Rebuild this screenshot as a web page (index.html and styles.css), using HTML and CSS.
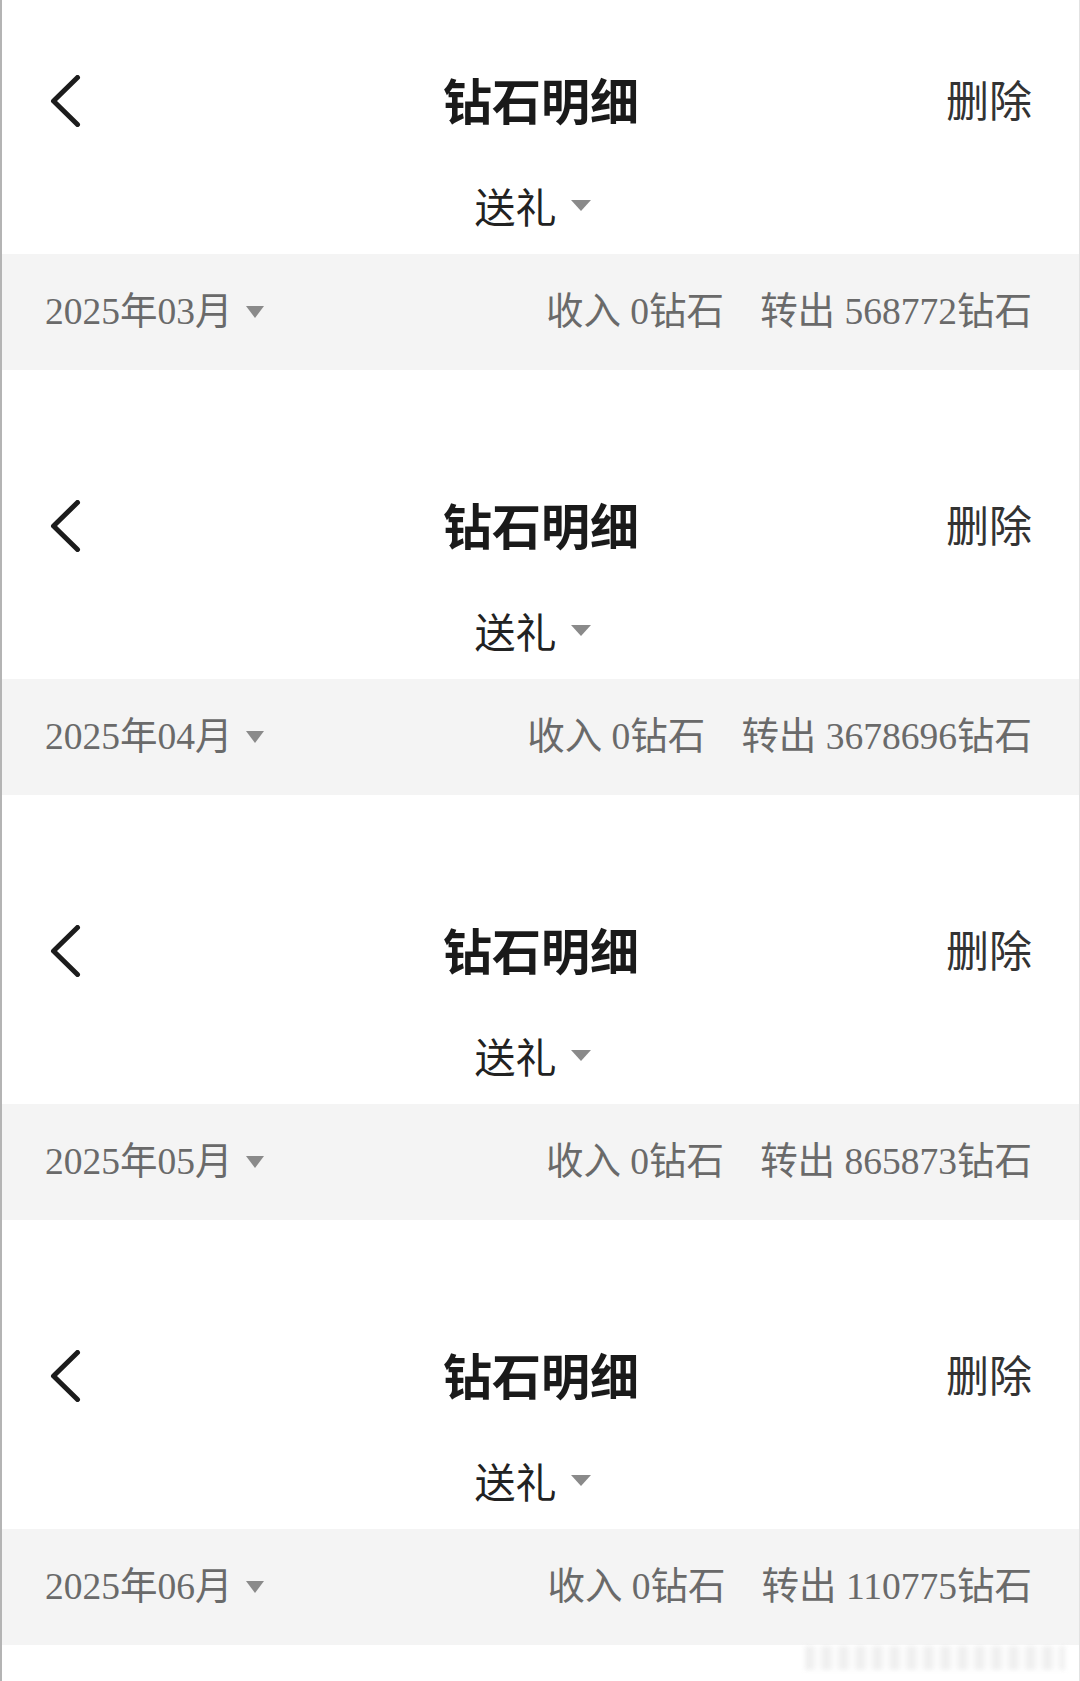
FILE: index.html
```html
<!DOCTYPE html>
<html lang="zh-CN">
<head>
    <meta charset="UTF-8">
    <meta name="viewport" content="width=device-width, initial-scale=1.0">
    <title>钻石明细</title>
    <link rel="stylesheet" href="styles.css">
</head>
<body>
    <div class="page">
        <section class="screen">
            <div class="nav">
                <span class="back"><svg width="32" height="52" viewBox="0 0 32 52"><polyline points="27.5,2.5 3.5,26 27.5,49.5" /></svg></span>
                <h1 class="title">钻石明细</h1>
                <span class="action">删除</span>
            </div>
            <div class="filter"><span>送礼</span><i class="caret"></i></div>
            <div class="summary">
                <div class="month">2025年03月<i class="caret small"></i></div>
                <div class="totals"><span>收入 0钻石</span><span>转出 568772钻石</span></div>
            </div>
        </section>
        <section class="screen">
            <div class="nav">
                <span class="back"><svg width="32" height="52" viewBox="0 0 32 52"><polyline points="27.5,2.5 3.5,26 27.5,49.5" /></svg></span>
                <h1 class="title">钻石明细</h1>
                <span class="action">删除</span>
            </div>
            <div class="filter"><span>送礼</span><i class="caret"></i></div>
            <div class="summary">
                <div class="month">2025年04月<i class="caret small"></i></div>
                <div class="totals"><span>收入 0钻石</span><span>转出 3678696钻石</span></div>
            </div>
        </section>
        <section class="screen">
            <div class="nav">
                <span class="back"><svg width="32" height="52" viewBox="0 0 32 52"><polyline points="27.5,2.5 3.5,26 27.5,49.5" /></svg></span>
                <h1 class="title">钻石明细</h1>
                <span class="action">删除</span>
            </div>
            <div class="filter"><span>送礼</span><i class="caret"></i></div>
            <div class="summary">
                <div class="month">2025年05月<i class="caret small"></i></div>
                <div class="totals"><span>收入 0钻石</span><span>转出 865873钻石</span></div>
            </div>
        </section>
        <section class="screen">
            <div class="nav">
                <span class="back"><svg width="32" height="52" viewBox="0 0 32 52"><polyline points="27.5,2.5 3.5,26 27.5,49.5" /></svg></span>
                <h1 class="title">钻石明细</h1>
                <span class="action">删除</span>
            </div>
            <div class="filter"><span>送礼</span><i class="caret"></i></div>
            <div class="summary">
                <div class="month">2025年06月<i class="caret small"></i></div>
                <div class="totals"><span>收入 0钻石</span><span>转出 110775钻石</span></div>
            </div>
        </section>
        <div class="footer"><div class="watermark"></div></div>
    </div>
</body>
</html>
```

FILE: styles.css
```css
body {
    margin: 0;
    padding: 0;
    background: #fff;
    font-family: "Noto Sans CJK SC", "Noto Sans", sans-serif;
}
.page {
    width: 1080px;
    min-height: 1681px;
    box-sizing: border-box;
    border-left: 2px solid #b4b4b4;
    border-right: 1px solid #e2e2e2;
    background: #fff;
}
.screen + .screen {
    margin-top: 55px;
}
.nav {
    display: grid;
    grid-template-columns: 1fr auto 1fr;
    align-items: center;
    height: 124px;
    padding: 36px 47px 0 48px;
}
.back {
    display: flex;
    align-items: center;
    margin-top: 6px;
}
.back svg polyline {
    fill: none;
    stroke: #1c1c1c;
    stroke-width: 5;
    stroke-linecap: round;
    stroke-linejoin: round;
}
.title {
    margin: 0;
    font-size: 49px;
    font-weight: 700;
    line-height: 1;
    color: #1a1a1a;
}
.action {
    justify-self: end;
    font-size: 43px;
    line-height: 1;
    color: #333;
}
.filter {
    display: flex;
    align-items: center;
    justify-content: center;
    height: 94px;
    padding-right: 16px;
    padding-bottom: 4px;
    box-sizing: border-box;
    font-size: 41px;
    line-height: 1;
    color: #222;
}
.caret {
    display: inline-block;
    width: 0;
    height: 0;
    margin-left: 14px;
    border-left: 10px solid transparent;
    border-right: 10px solid transparent;
    border-top: 11px solid #8a8a8a;
}
.caret.small {
    margin-left: 13px;
    border-left-width: 9px;
    border-right-width: 9px;
    border-top-width: 12px;
}
.summary {
    display: flex;
    align-items: center;
    justify-content: space-between;
    height: 116px;
    padding: 0 47px 0 43px;
    background: #f4f4f4;
    font-family: "Liberation Serif", "Noto Sans CJK SC", serif;
    font-size: 37.5px;
    line-height: 1;
    color: #6a6a6a;
}
.month {
    display: flex;
    align-items: center;
}
.totals {
    display: flex;
    gap: 36px;
}
.footer {
    display: flex;
    justify-content: flex-end;
    padding: 1px 14px 0 0;
}
.watermark {
    width: 260px;
    height: 24px;
    background: repeating-linear-gradient(90deg, #ececec 0 9px, #fafafa 9px 17px);
    filter: blur(2px);
    opacity: 0.8;
}
```
